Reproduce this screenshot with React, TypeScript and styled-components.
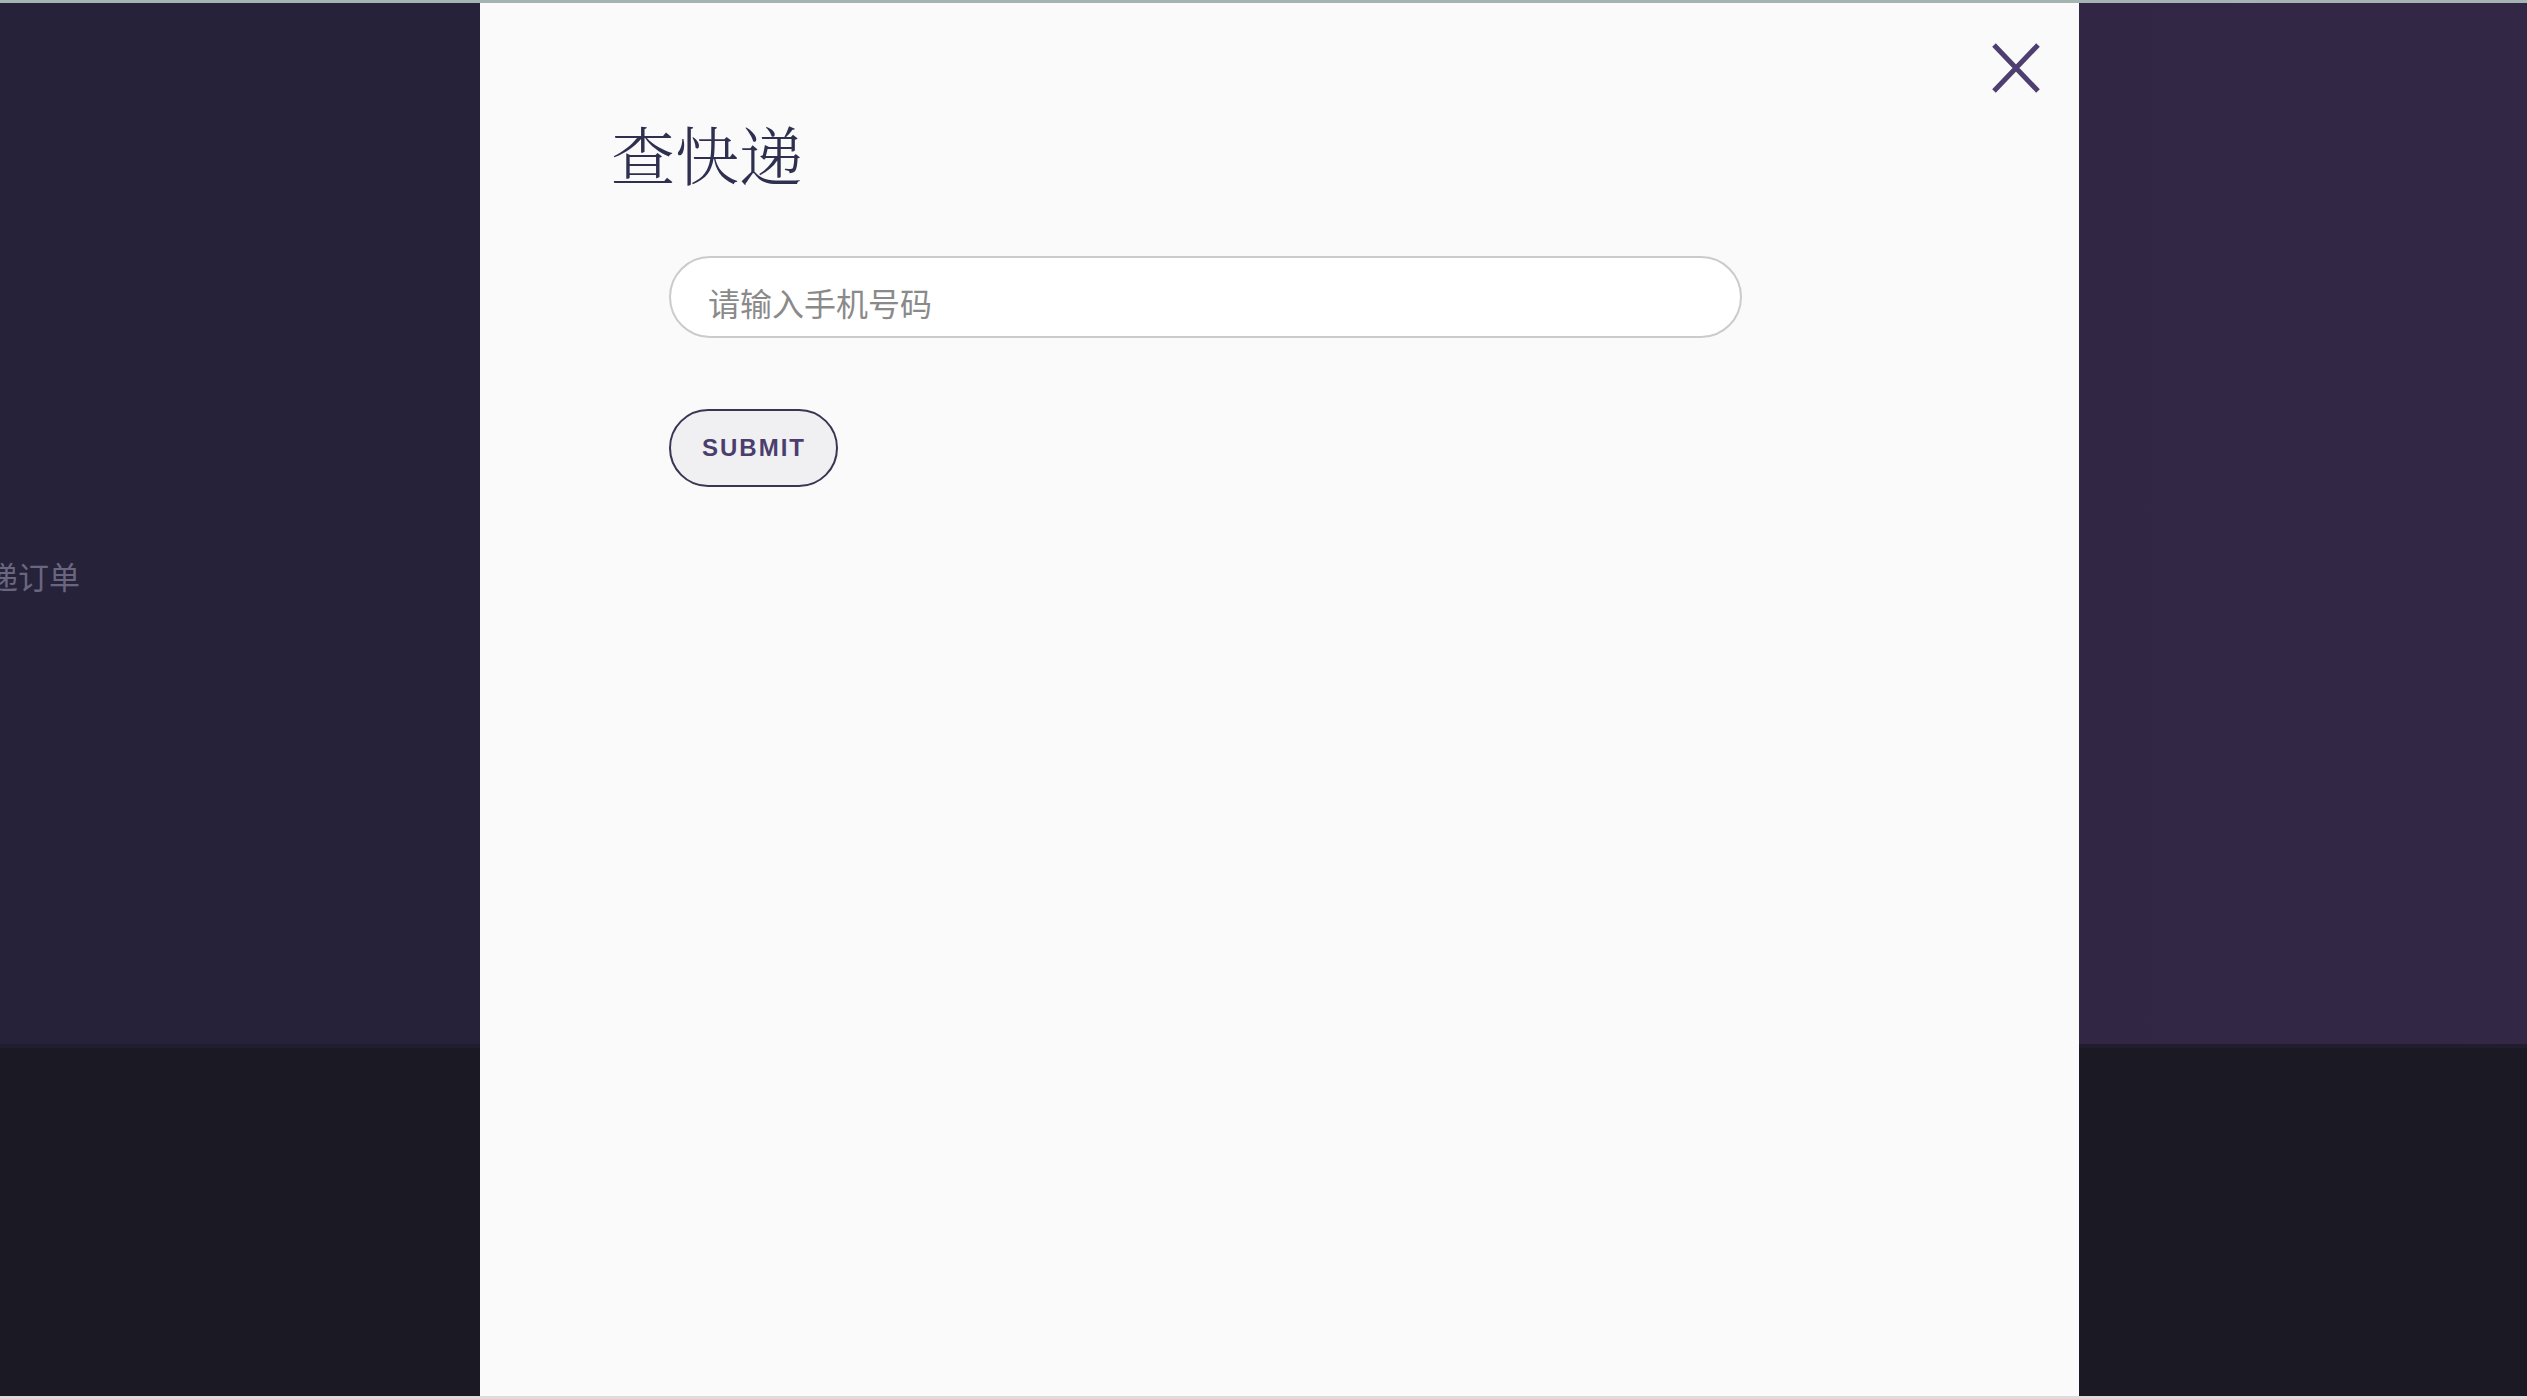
import React from "react";
import styled, { createGlobalStyle } from "styled-components";

const Global = createGlobalStyle`
  html, body { margin: 0; padding: 0; height: 100%; overflow: hidden; }
  body { font-family: "Liberation Sans", "Noto Sans CJK SC", sans-serif; }
  #root { height: 100%; }
  * { box-sizing: border-box; }
`;

const Shell = styled.div`
  display: flex;
  flex-direction: column;
  height: 1399px;
  width: 2527px;
`;

const TopLine = styled.div`
  height: 3px;
  flex: none;
  background: #a6b3b3;
`;

const BottomLine = styled.div`
  height: 3px;
  flex: none;
  background: #dcdcdc;
`;

const Stage = styled.div`
  position: relative;
  flex: 1;
  display: flex;
  flex-direction: column;
  overflow: hidden;
`;

const Hero = styled.section`
  height: 1045px;
  flex: none;
  display: flex;
  align-items: center;
  background: linear-gradient(90deg, #25223a 0%, #26223a 19%, #312744 82%, #322845 100%);
  border-bottom: 4px solid #221c2f;
`;

const HeroLabelClip = styled.div`
  width: 80px;
  display: flex;
  justify-content: flex-end;
  overflow: hidden;
  margin-top: 104px;
`;

const HeroLabel = styled.span`
  flex: none;
  white-space: nowrap;
  font-family: "Noto Sans CJK SC", sans-serif;
  font-size: 31px;
  line-height: 40px;
  color: #6b6680;
`;

const Footer = styled.footer`
  flex: 1;
  background: #1b1924;
`;

const Modal = styled.div`
  position: absolute;
  top: 0;
  bottom: 0;
  left: 480px;
  width: 1599px;
  background: #fafafa;
  padding: 113px 0 0 131px;
  display: flex;
  flex-direction: column;
`;

const CloseButton = styled.button`
  position: absolute;
  top: 40px;
  right: 39px;
  width: 48px;
  height: 50px;
  padding: 0;
  border: none;
  background: transparent;
  cursor: pointer;
  display: flex;
`;

const Title = styled.h1`
  margin: 0;
  font-family: "Noto Serif CJK SC", "Noto Sans CJK SC", serif;
  font-weight: 300;
  font-size: 64px;
  line-height: 72px;
  color: #2f3050;
`;

const Form = styled.form`
  margin: 68px 0 0 58px;
  display: flex;
  flex-direction: column;
  align-items: flex-start;
  gap: 71px;
`;

const PhoneInput = styled.input`
  width: 1073px;
  height: 82px;
  border: 2px solid #cbcbcb;
  border-radius: 41px;
  background: #ffffff;
  padding: 10px 36px 0 37px;
  font-family: "Noto Sans CJK SC", sans-serif;
  font-size: 32px;
  color: #333;
  outline: none;
  &::placeholder { color: #8a8a8a; }
`;

const SubmitButton = styled.button`
  height: 78px;
  padding: 0 30px 0 31px;
  border: 2px solid #3b3553;
  border-radius: 39px;
  background: #f0eff2;
  font-family: "Liberation Sans", Arial, sans-serif;
  font-weight: 700;
  font-size: 24px;
  letter-spacing: 2px;
  color: #4b3e6d;
  cursor: pointer;
`;

export default function App() {
  return (
    <>
      <Global />
      <Shell>
        <TopLine />
        <Stage>
          <Hero>
            <HeroLabelClip>
              <HeroLabel>查快递订单</HeroLabel>
            </HeroLabelClip>
          </Hero>
          <Footer />
          <Modal>
            <CloseButton type="button" aria-label="close">
              <svg width="48" height="50" viewBox="0 0 48 50">
                <path d="M2 2 L46 48 M46 2 L2 48" stroke="#4d3f70" strokeWidth="5" fill="none" />
              </svg>
            </CloseButton>
            <Title>查快递</Title>
            <Form onSubmit={(e) => e.preventDefault()}>
              <PhoneInput placeholder="请输入手机号码" />
              <SubmitButton type="submit">SUBMIT</SubmitButton>
            </Form>
          </Modal>
        </Stage>
        <BottomLine />
      </Shell>
    </>
  );
}
